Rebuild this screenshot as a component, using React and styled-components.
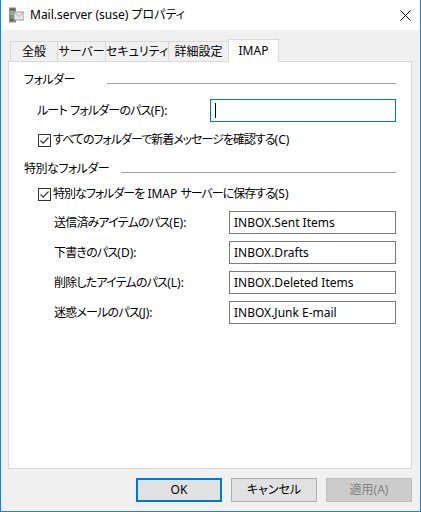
import styled, { createGlobalStyle } from "styled-components";

const GlobalStyle = createGlobalStyle`
  html, body {
    margin: 0;
    padding: 0;
    background: #ffffff;
  }
  * {
    box-sizing: border-box;
  }
  body {
    font-family: "Noto Sans", "Noto Sans CJK JP", sans-serif;
    font-size: 12px;
    font-feature-settings: "palt";
    color: #000000;
  }
`;

const tabs = [
  { label: "全般", width: 48 },
  { label: "サーバー", width: 49 },
  { label: "セキュリティ", width: 64 },
  { label: "詳細設定", width: 61 },
  { label: "IMAP", width: 51, active: true },
];

const specialPaths = [
  { label: "送信済みアイテムのパス(E):", value: "INBOX.Sent Items" },
  { label: "下書きのパス(D):", value: "INBOX.Drafts" },
  { label: "削除したアイテムのパス(L):", value: "INBOX.Deleted Items" },
  { label: "迷惑メールのパス(J):", value: "INBOX.Junk E-mail" },
];

// kana get squeezed, latin runs (and spaces) keep their normal spacing
function Label({ text }) {
  return text
    .split(/([\x20-\x7e]+)/)
    .filter(Boolean)
    .map((part, i) =>
      /^[\x20-\x7e]+$/.test(part) ? <Latin key={i}>{part}</Latin> : <span key={i}>{part}</span>
    );
}

function AppIcon() {
  return (
    <svg width="16" height="16" viewBox="0 0 16 16">
      <rect x="1" y="0.5" width="7" height="15" fill="#8d8d8d" />
      <rect x="2" y="1.5" width="5" height="2" fill="#5f5f5f" />
      <rect x="2" y="4.5" width="5" height="1" fill="#b9b9b9" />
      <rect x="2" y="6.5" width="5" height="1" fill="#b9b9b9" />
      <rect x="2" y="8" width="2" height="2" fill="#3fbf3f" />
      <rect x="2" y="12" width="5" height="2" fill="#5f5f5f" />
      <rect x="6" y="5" width="10" height="8" fill="#e6e6e6" stroke="#9a9a9a" strokeWidth="1" />
      <path d="M6.5 5.5 L11 9.5 L15.5 5.5" fill="none" stroke="#a8a8a8" strokeWidth="1" />
    </svg>
  );
}

function CheckBox() {
  return (
    <Box>
      <svg width="11" height="11" viewBox="0 0 11 11">
        <path d="M1.5 5.5 L4.2 8.2 L9.5 2.5" fill="none" stroke="#333333" strokeWidth="1.2" />
      </svg>
    </Box>
  );
}

export default function App() {
  return (
    <>
      <GlobalStyle />
      <Window>
        <TitleBar>
          <AppIcon />
          <TitleText>Mail.server (suse) プロパティ</TitleText>
          <CloseBtn>
            <svg width="11" height="11" viewBox="0 0 11 11">
              <path d="M0.5 0.5 L10.5 10.5 M10.5 0.5 L0.5 10.5" stroke="#000" strokeWidth="1" />
            </svg>
          </CloseBtn>
        </TitleBar>

        <Body>
          <TabStrip>
            {tabs.map((t) => (
              <Tab key={t.label} $w={t.width} $active={t.active}>
                {t.label}
              </Tab>
            ))}
          </TabStrip>

          <Panel>
            <SectionHeader>
              <SectionLabel>フォルダー</SectionLabel>
              <Rule $gap={32} />
            </SectionHeader>

            <FieldRow $indent={13} $top={11}>
              <FieldLabel $w={173}>
                <Label text="ルート フォルダーのパス(F):" />
              </FieldLabel>
              <TextBox $w={187} $focused>
                <Caret />
              </TextBox>
            </FieldRow>

            <CheckRow $top={10}>
              <CheckBox />
              <CheckText>
                <Label text="すべてのフォルダーで新着メッセージを確認する(C)" />
              </CheckText>
            </CheckRow>

            <SectionHeader $top={13}>
              <SectionLabel>特別なフォルダー</SectionLabel>
              <Rule $gap={12} />
            </SectionHeader>

            <CheckRow $top={9}>
              <CheckBox />
              <CheckText>
                <Label text="特別なフォルダーを IMAP サーバーに保存する(S)" />
              </CheckText>
            </CheckRow>

            {specialPaths.map((p, i) => (
              <FieldRow key={p.label} $indent={30} $top={i === 0 ? 9 : 7}>
                <FieldLabel $w={175}>
                  <Label text={p.label} />
                </FieldLabel>
                <TextBox $w={168}>{p.value}</TextBox>
              </FieldRow>
            ))}
          </Panel>

          <ButtonRow>
            <Button $variant="default">OK</Button>
            <Button>キャンセル</Button>
            <Button $variant="disabled">適用(A)</Button>
          </ButtonRow>
        </Body>
      </Window>
    </>
  );
}

const Window = styled.div`
  width: 421px;
  height: 512px;
  display: flex;
  flex-direction: column;
  border-left: 1px solid #1883d7;
  border-right: 1px solid #1883d7;
  border-bottom: 1px solid #1883d7;
  background: #f0f0f0;
`;

const TitleBar = styled.div`
  height: 30px;
  flex-shrink: 0;
  display: flex;
  align-items: center;
  padding-left: 7px;
  background: #ffffff;
`;

const TitleText = styled.span`
  margin-left: 6px;
  font-size: 12px;
  line-height: 16px;
  flex: 1;
  margin-top: -1px;
`;

const CloseBtn = styled.div`
  width: 30px;
  height: 30px;
  display: flex;
  align-items: center;
  justify-content: center;
  padding-left: 1px;
`;

const Body = styled.div`
  flex: 1;
  display: flex;
  flex-direction: column;
  padding: 9px 8px 0 7px;
`;

const TabStrip = styled.div`
  height: 22px;
  display: flex;
  align-items: flex-end;
  padding-left: 2px;
`;

const Tab = styled.div`
  position: relative;
  width: ${({ $w }) => $w}px;
  height: ${({ $active }) => ($active ? 23 : 20)}px;
  margin-left: -1px;
  margin-bottom: ${({ $active }) => ($active ? -1 : 0)}px;
  z-index: ${({ $active }) => ($active ? 2 : 1)};
  display: flex;
  align-items: center;
  justify-content: center;
  padding-bottom: ${({ $active }) => ($active ? 1 : 0)}px;
  border: 1px solid #d9d9d9;
  border-bottom: none;
  background: ${({ $active }) => ($active ? "#ffffff" : "#f0f0f0")};
  font-size: 12px;
  line-height: 16px;
  white-space: nowrap;
  &:first-child {
    margin-left: 0;
  }
`;

const Panel = styled.div`
  height: 408px;
  flex-shrink: 0;
  background: #ffffff;
  border: 1px solid #d9d9d9;
  padding: 10px 15px 0 15px;
  display: flex;
  flex-direction: column;
`;

const SectionHeader = styled.div`
  height: 16px;
  margin-top: ${({ $top }) => $top || 0}px;
  display: flex;
  align-items: center;
`;

const SectionLabel = styled.span`
  line-height: 16px;
  white-space: nowrap;
  letter-spacing: -0.5px;
`;

const Rule = styled.div`
  flex: 1;
  height: 1px;
  margin-left: ${({ $gap }) => $gap}px;
  margin-top: 6px;
  background: #a0a0a0;
`;

const FieldRow = styled.div`
  height: 23px;
  margin-top: ${({ $top }) => $top}px;
  padding-left: ${({ $indent }) => $indent}px;
  display: flex;
  align-items: center;
`;

const FieldLabel = styled.span`
  width: ${({ $w }) => $w}px;
  flex-shrink: 0;
  line-height: 16px;
  white-space: pre;
  letter-spacing: -0.8px;
`;

const Latin = styled.span`
  letter-spacing: 0;
`;

const TextBox = styled.div`
  width: ${({ $w }) => $w}px;
  height: 23px;
  display: flex;
  align-items: center;
  padding-left: 4px;
  border: 1px solid ${({ $focused }) => ($focused ? "#0078d7" : "#7a7a7a")};
  background: #ffffff;
  font-size: 12px;
  line-height: 16px;
  white-space: nowrap;
`;

const Caret = styled.span`
  width: 1px;
  height: 15px;
  background: #000000;
`;

const CheckRow = styled.div`
  height: 16px;
  margin-top: ${({ $top }) => $top}px;
  padding-left: 14px;
  display: flex;
  align-items: center;
  gap: 2px;
`;

const CheckText = styled.span`
  line-height: 16px;
  white-space: pre;
  letter-spacing: -1px;
`;

const Box = styled.span`
  width: 13px;
  height: 13px;
  flex-shrink: 0;
  display: flex;
  align-items: center;
  justify-content: center;
  border: 1px solid #333333;
  background: #ffffff;
`;

const ButtonRow = styled.div`
  height: 42px;
  display: flex;
  align-items: center;
  justify-content: flex-end;
  gap: 9px;
`;

const Button = styled.div`
  width: 86px;
  height: 24px;
  display: flex;
  align-items: center;
  justify-content: center;
  font-size: 12px;
  line-height: 16px;
  background: ${({ $variant }) => ($variant === "disabled" ? "#cccccc" : "#e1e1e1")};
  color: ${({ $variant }) => ($variant === "disabled" ? "#838383" : "#000000")};
  border: ${({ $variant }) =>
    $variant === "default"
      ? "2px solid #0078d7"
      : $variant === "disabled"
      ? "1px solid #bfbfbf"
      : "1px solid #adadad"};
`;
